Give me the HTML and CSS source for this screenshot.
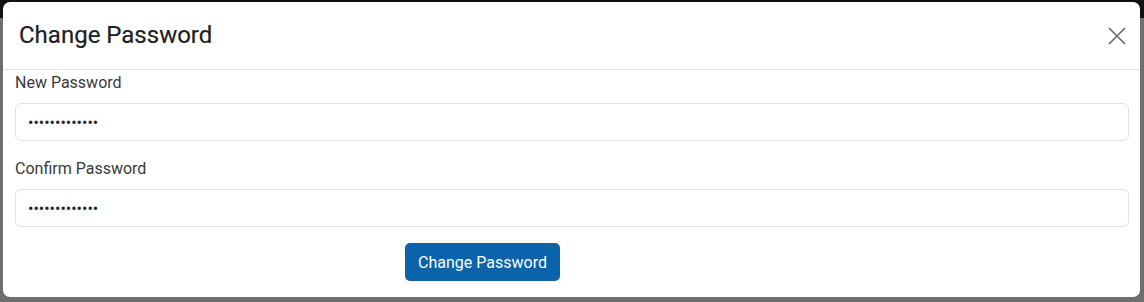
FILE: index.html
```html
<!DOCTYPE html>
<html>
<head>
<meta charset="utf-8">
<link rel="stylesheet" href="styles.css">
</head>
<body>
<div class="modal">
  <div class="modal-header">
    <h5 class="modal-title">Change Password</h5>
    <button class="close" aria-label="Close">
      <svg width="18" height="18" viewBox="0 0 18 18"><path d="M1 1L17 17M17 1L1 17" stroke="#6b6b6b" stroke-width="1.7" fill="none"/></svg>
    </button>
  </div>
  <div class="modal-body">
    <label class="label">New Password</label>
    <input class="input" type="password" value="1234567890123">
    <label class="label second">Confirm Password</label>
    <input class="input" type="password" value="1234567890123">
    <div class="actions">
      <button class="btn">Change Password</button>
    </div>
  </div>
</div>
</body>
</html>
```
FILE: styles.css
```css
html, body {
  margin: 0;
  padding: 0;
}
body {
  width: 1144px;
  height: 302px;
  overflow: hidden;
  background: linear-gradient(#121212 0, #121212 18px, #6e6e6e 18px);
  font-family: Roboto, "Liberation Sans", sans-serif;
  color: #212529;
}
.modal {
  box-sizing: border-box;
  margin: 2px 0 0 3px;
  width: 1137px;
  height: 295px;
  background: #fff;
  border-radius: 7px;
  display: flex;
  flex-direction: column;
}
.modal-header {
  box-sizing: border-box;
  height: 68px;
  border-bottom: 1px solid #dee2e6;
  display: flex;
  align-items: center;
  justify-content: space-between;
  padding: 0 14px 0 16px;
}
.modal-title {
  margin: 0;
  font-size: 24px;
  font-weight: 400;
  line-height: 1.2;
  color: #1c1f23;
  -webkit-text-stroke: 0.2px #1c1f23;
}
.close {
  border: 0;
  background: none;
  padding: 0;
  width: 18px;
  height: 18px;
  display: flex;
}
.modal-body {
  padding: 1px 11px 15px 12px;
  display: flex;
  flex-direction: column;
}
.label {
  font-size: 16px;
  line-height: 24px;
  margin-bottom: 8px;
  color: #3a3a3a;
}
.label.second {
  margin-top: 16px;
}
.input {
  box-sizing: border-box;
  height: 38px;
  width: 100%;
  border: 1px solid #dee2e6;
  border-radius: 6px;
  padding: 0 12px;
  font-size: 16px;
  font-family: Roboto, "Liberation Sans", sans-serif;
  color: #212529;
  outline: none;
}
.actions {
  margin-top: 16px;
  padding-left: 390px;
  display: flex;
}
.btn {
  box-sizing: border-box;
  height: 38px;
  width: 155px;
  border: 0;
  border-radius: 5px;
  background: #0a63ab;
  color: #fff;
  font-family: Roboto, "Liberation Sans", sans-serif;
  font-size: 16px;
  padding: 0;
}
```
